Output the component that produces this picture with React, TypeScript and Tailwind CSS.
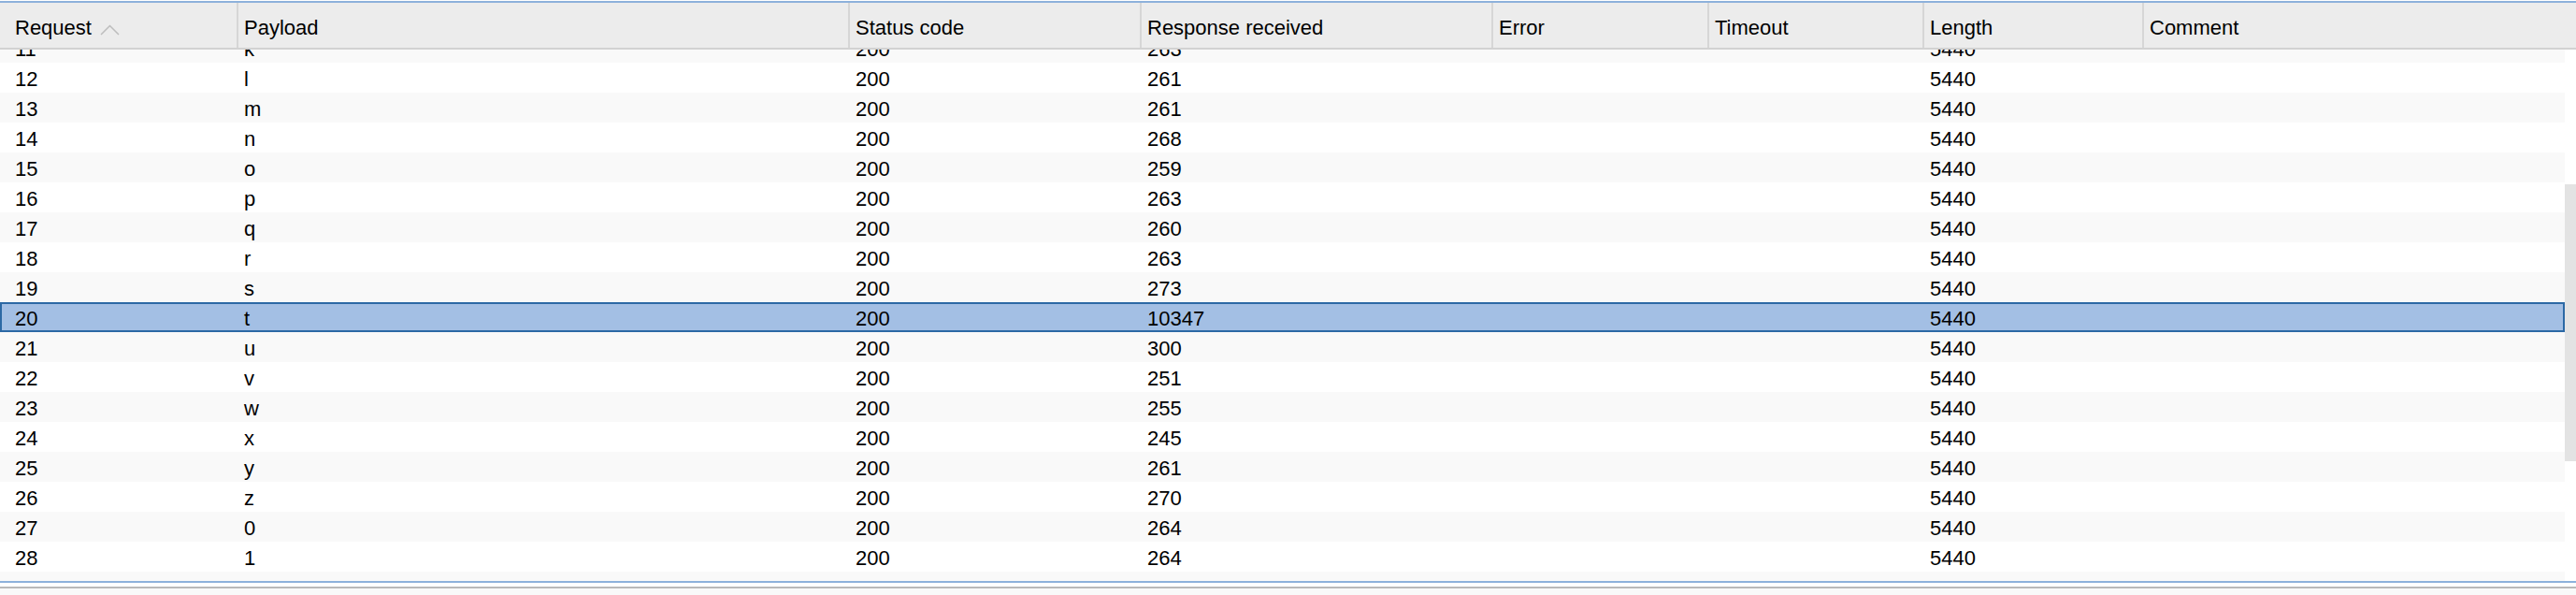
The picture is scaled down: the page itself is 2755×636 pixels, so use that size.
import React from "react";

const cols = "grid grid-cols-[253px_654px_312px_376px_231px_230px_235px_452px]";

type Row = { req: number | null; payload: string; status: string; resp: string; len: string };

const rows: Row[] = [
  { req: 11, payload: "k", status: "200", resp: "263", len: "5440" },
  { req: 12, payload: "l", status: "200", resp: "261", len: "5440" },
  { req: 13, payload: "m", status: "200", resp: "261", len: "5440" },
  { req: 14, payload: "n", status: "200", resp: "268", len: "5440" },
  { req: 15, payload: "o", status: "200", resp: "259", len: "5440" },
  { req: 16, payload: "p", status: "200", resp: "263", len: "5440" },
  { req: 17, payload: "q", status: "200", resp: "260", len: "5440" },
  { req: 18, payload: "r", status: "200", resp: "263", len: "5440" },
  { req: 19, payload: "s", status: "200", resp: "273", len: "5440" },
  { req: 20, payload: "t", status: "200", resp: "10347", len: "5440" },
  { req: 21, payload: "u", status: "200", resp: "300", len: "5440" },
  { req: 22, payload: "v", status: "200", resp: "251", len: "5440" },
  { req: 23, payload: "w", status: "200", resp: "255", len: "5440" },
  { req: 24, payload: "x", status: "200", resp: "245", len: "5440" },
  { req: 25, payload: "y", status: "200", resp: "261", len: "5440" },
  { req: 26, payload: "z", status: "200", resp: "270", len: "5440" },
  { req: 27, payload: "0", status: "200", resp: "264", len: "5440" },
  { req: 28, payload: "1", status: "200", resp: "264", len: "5440" },
  { req: null, payload: "", status: "", resp: "", len: "" },
];

function HeaderCell({ label, first, children }: { label: string; first?: boolean; children?: React.ReactNode }) {
  return (
    <div
      className={
        first
          ? "flex items-start h-[48px] pl-[16px] pt-[5px] leading-[43px] whitespace-nowrap"
          : "flex items-start h-[48px] pl-[6px] pt-[5px] leading-[43px] whitespace-nowrap border-l-2 border-[#d6d6d6]"
      }
    >
      <span>{label}</span>
      {children}
    </div>
  );
}

export default function App() {
  return (
    <div
      className="w-[2755px] h-[636px] overflow-hidden bg-white flex flex-col text-[22px] text-black"
      style={{ fontFamily: '"Liberation Sans", Arial, sans-serif' }}
    >
      <div className="h-[1px] bg-white shrink-0" />
      <div className="h-[2px] bg-[#8db1db] shrink-0" />
      {/* header */}
      <div className="grid grid-cols-[253px_654px_312px_376px_231px_230px_235px_464px] bg-[#ececec] shrink-0">
        <HeaderCell label="Request" first>
          <svg width="21" height="12" viewBox="0 0 21 12" className="ml-[9px] mt-[18px]">
            <polyline points="1,11 10.5,1.5 20,11" fill="none" stroke="#bdbdbd" strokeWidth="1.5" />
          </svg>
        </HeaderCell>
        <HeaderCell label="Payload" />
        <HeaderCell label="Status code" />
        <HeaderCell label="Response received" />
        <HeaderCell label="Error" />
        <HeaderCell label="Timeout" />
        <HeaderCell label="Length" />
        <HeaderCell label="Comment" />
      </div>
      <div className="h-[2px] bg-[#d2d2d2] shrink-0" />
      {/* body */}
      <div className="h-[568px] flex overflow-hidden shrink-0">
        <div className="w-[2743px] flex flex-col mt-[-18px]">
          {rows.map((r, i) => {
            const selected = r.req === 20;
            const odd = i % 2 === 0;
            const bg = selected
              ? "bg-[#a3bfe4] outline-2 outline-[#2c69a5] -outline-offset-2"
              : odd
              ? "bg-[#f9f9f9]"
              : "bg-white";
            return (
              <div key={i} className={`${cols} h-[32px] shrink-0 ${bg}`}>
                <div className="pl-[16px] pt-[3px] leading-[29px] whitespace-nowrap">{r.req ?? ""}</div>
                <div className="pl-[8px] pt-[3px] leading-[29px] whitespace-nowrap">{r.payload}</div>
                <div className="pl-[8px] pt-[3px] leading-[29px] whitespace-nowrap">{r.status}</div>
                <div className="pl-[8px] pt-[3px] leading-[29px] whitespace-nowrap">{r.resp}</div>
                <div className="pl-[8px] pt-[3px] leading-[29px]" />
                <div className="pl-[8px] pt-[3px] leading-[29px]" />
                <div className="pl-[8px] pt-[3px] leading-[29px] whitespace-nowrap">{r.len}</div>
                <div className="pl-[8px] pt-[3px] leading-[29px]" />
              </div>
            );
          })}
        </div>
        <div className="w-[12px] bg-white pt-[144px]">
          <div className="h-[296px] bg-[#e3e3e3]" />
        </div>
      </div>
      <div className="h-[2px] bg-[#8db1db] shrink-0" />
      <div className="h-[4px] bg-white shrink-0" />
      <div className="h-[2px] bg-[#b9b9b9] shrink-0" />
      <div className="flex-1 bg-[#f9f9f9]" />
    </div>
  );
}
